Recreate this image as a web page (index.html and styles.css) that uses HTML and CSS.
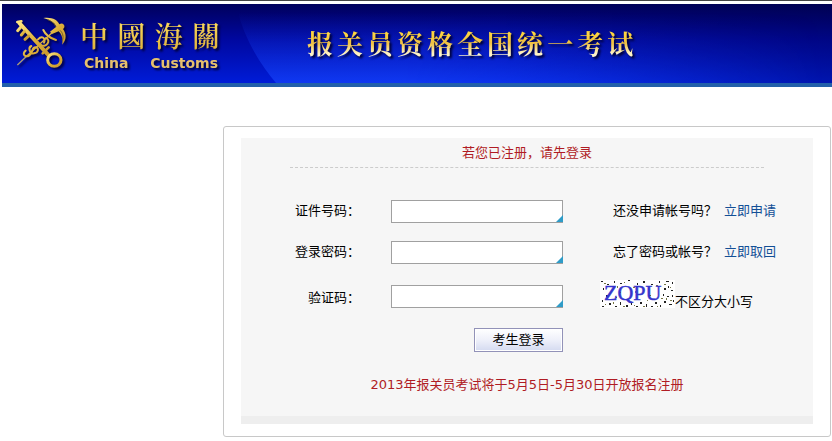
FILE: index.html
```html
<!DOCTYPE html>
<html lang="zh-CN">
<head>
<meta charset="utf-8">
<title>报关员资格全国统一考试</title>
<link rel="stylesheet" href="styles.css">
</head>
<body>
<header class="banner">
  <svg class="sweep" viewBox="0 0 600 79" preserveAspectRatio="none" aria-hidden="true">
    <defs>
      <linearGradient id="sweepFill" x1="0" y1="0" x2="0" y2="1">
        <stop offset="0.1" stop-color="#1034e0" stop-opacity="0"/>
        <stop offset="1" stop-color="#1848ff" stop-opacity="0.65"/>
      </linearGradient>
      <linearGradient id="sweepFade" x1="0" y1="0" x2="1" y2="0">
        <stop offset="0.3" stop-color="#fff"/>
        <stop offset="1" stop-color="#000"/>
      </linearGradient>
      <mask id="sweepMask"><rect width="600" height="79" fill="url(#sweepFade)"/></mask>
    </defs>
    <path d="M14 0C20 30 36 58 54 79H600V0Z" fill="url(#sweepFill)" mask="url(#sweepMask)"/>
  </svg>
  <svg class="emblem" viewBox="0 0 195 195" aria-hidden="true">
    <defs>
      <linearGradient id="gold" x1="0" y1="0" x2="1" y2="1">
        <stop offset="0" stop-color="#ffe680"/>
        <stop offset="0.55" stop-color="#dcae38"/>
        <stop offset="1" stop-color="#c89830"/>
      </linearGradient>
    </defs>
    <g fill="none" stroke="url(#gold)" stroke-linecap="round">
      <path d="M23 164L48 140" stroke="#a79a78" stroke-width="4"/>
      <path d="M48 140L144 52" stroke-width="4"/>
      <path d="M47 122C34 132 46 144 58 136S64 112 76 112 86 128 72 130 54 112 64 108M84 88C96 76 108 84 102 98M100 60C106 74 120 84 138 90M92 104C106 116 126 92 108 84" stroke-width="6"/>
      <path d="M28 39L116 136" stroke-width="12"/>
      <path d="M32 52L23 62M43 64L34 75M56 78L45 88" stroke-width="9"/>
      <path d="M22 36L34 34M98 130L116 112" stroke-width="8"/>
      <ellipse cx="133" cy="150" rx="20" ry="19" stroke-width="9"/>
    </g>
    <path d="M100 24C124 20 143 29 148 43C160 35 169 50 159 57C170 72 170 90 156 104C160 88 156 74 146 64L126 72L120 65L139 50C134 38 120 29 100 24Z" fill="url(#gold)"/>
    <path d="M113 29C127 34 134 42 137 50M157 92C162 80 158 68 150 61" fill="none" stroke="#6d5b2c" stroke-width="3"/>
  </svg>
  <div class="brand">
    <div class="brand-cn"><span>中</span><span>國</span><span>海</span><span>關</span></div>
    <div class="brand-en"><span>China</span> <span>Customs</span></div>
  </div>
  <h1 class="title"><span>报</span><span>关</span><span>员</span><span>资</span><span>格</span><span>全</span><span>国</span><span>统</span><span>一</span><span>考</span><span>试</span></h1>
</header>

<main class="panel">
  <form class="login">
    <h2 class="lead">若您已注册，请先登录</h2>
    <div class="fields">
      <label for="idno">证件号码：</label>
      <span class="box"><input id="idno" type="text"></span>
      <p class="hint">还没申请帐号吗？<a href="#apply">立即申请</a></p>

      <label for="pwd">登录密码：</label>
      <span class="box"><input id="pwd" type="password"></span>
      <p class="hint">忘了密码或帐号？<a href="#recover">立即取回</a></p>

      <label for="code">验证码：</label>
      <span class="box"><input id="code" type="text"></span>
      <p class="verify">
        <svg class="captcha" viewBox="0 0 75 28" role="img" aria-label="ZQPU">
          <rect width="75" height="28" fill="#fff"/>
          <path d="M1 1h2v1h-2zM7 4h2v1h-2zM14 1h1v2h-1zM20 3h2v1h-2zM28 0h2v1h-2zM37 3h1v2h-1zM43 1h2v2h-2zM51 4h2v1h-2zM59 1h1v2h-1zM66 1h3v1h-3zM72 2h1v2h-1zM3 8h1v2h-1zM6 15h2v2h-2zM2 20h1v2h-1zM2 26h2v1h-2zM9 23h2v2h-2zM15 26h2v1h-2zM20 22h1v3h-1zM26 25h2v2h-2zM31 23h1v2h-1zM36 26h2v1h-2zM40 22h2v2h-2zM46 24h1v3h-1zM51 26h2v1h-2zM55 22h2v2h-2zM60 25h1v2h-1zM64 21h2v2h-2zM69 24h3v1h-3zM73 20h1v2h-1zM64 8h2v2h-2zM68 6h1v2h-1zM71 10h2v1h-2zM63 14h1v2h-1zM67 16h2v1h-2zM72 15h1v2h-1z" fill="#222"/>
          <path d="M4 3h2v1h-2zM17 6h1v2h-1zM24 2h1v1h-1zM33 7h2v1h-2zM48 8h1v2h-1zM56 5h2v1h-2zM64 4h2v1h-2zM70 7h1v1h-1zM5 24h1v1h-1zM13 22h1v2h-1zM23 26h2v1h-2zM34 25h1v1h-1zM43 26h2v1h-2zM57 26h1v1h-1zM66 18h1v2h-1zM70 20h2v1h-2zM20 12h1v1h-1zM35 11h1v2h-1zM49 15h2v1h-2zM16 17h1v1h-1zM47 20h1v1h-1zM61 18h2v1h-2z" fill="#777746"/>
          <text class="captcha-text" x="4" y="20">ZQPU</text>
        </svg><span>不区分大小写</span>
      </p>
      <button class="submit" type="submit">考生登录</button>
    </div>
    <p class="notice">2013年报关员考试将于5月5日-5月30日开放报名注册</p>
  </form>
</main>
</body>
</html>
```

FILE: styles.css
```css
* {
  box-sizing: border-box;
}

body {
  margin: 0;
  border-top: 1px solid #444;
  background: #fff;
  color: #000;
  font: 13px/18px "DejaVu Sans", "Noto Sans CJK SC", sans-serif;
}

h1, h2, p {
  margin: 0;
  font-weight: normal;
}

.banner {
  position: relative;
  display: flex;
  align-items: flex-start;
  margin: 3px 0 0 2px;
  height: 83px;
  border-bottom: 4px solid #2260aa;
  background:
    linear-gradient(90deg, rgba(0, 0, 50, 0) 60%, rgba(0, 0, 50, 0.25)),
    linear-gradient(#00005c, #0008a0 45%, #001cd8);
  overflow: hidden;
}

.sweep {
  position: absolute;
  top: 0;
  left: 220px;
  width: 600px;
  height: 79px;
}

.emblem {
  position: relative;
  width: 65px;
  height: 65px;
  margin: 6px 0 0 8px;
  filter: drop-shadow(2px 2px 1px #000040);
}

.brand {
  position: relative;
  margin: 13px 0 0 5px;
  width: 140px;
  filter: drop-shadow(2px 2px 1px #000030);
}

.brand-cn {
  display: flex;
  justify-content: space-between;
  font: 600 28px/36px "Noto Serif CJK TC", "Noto Serif CJK SC", "Noto Sans CJK TC", serif;
}

.brand-cn span,
.title span {
  background: linear-gradient(#ffd840 20%, #f0c040 50%, #fff4c8 80%);
  -webkit-background-clip: text;
  background-clip: text;
  color: transparent;
}

.brand-cn span {
  background-image: linear-gradient(#ffe060, #dcae38);
}

.brand-en {
  display: flex;
  justify-content: space-between;
  padding: 0 2px 0 4px;
  color: #e6c06c;
  font: bold 14px/20px "DejaVu Sans", sans-serif;
}

.title {
  position: relative;
  display: flex;
  gap: 4px;
  margin: 21px 0 0 87px;
  font: bold 26px/36px "Noto Serif CJK SC", "Noto Sans CJK SC", serif;
  filter: drop-shadow(2px 2px 1px #000030);
}

.panel {
  margin: 39px 1px 4px 223px;
  padding: 11px 17px 12px;
  border: 1px solid #c8c8c8;
  border-radius: 3px;
}

.login {
  padding: 6px 49px 22px;
  border-bottom: 8px solid #eee;
  background: #f6f6f6;
}

.lead {
  padding-bottom: 5px;
  border-bottom: 1px dashed #ccc;
  color: #b01c24;
  font-size: 13px;
  line-height: 18px;
  text-align: center;
}

.fields {
  display: grid;
  grid-template-columns: 70px 172px 1fr;
  column-gap: 31px;
  align-items: end;
  padding-top: 32px;
}

.fields label {
  margin-bottom: 20px;
  line-height: 21px;
  text-align: right;
}

.box {
  position: relative;
  display: block;
  margin-bottom: 18px;
}

.box::after {
  content: "";
  position: absolute;
  right: 0;
  bottom: 1px;
  border-bottom: 7px solid #2f9cc8;
  border-left: 7px solid transparent;
}

.box input {
  display: block;
  width: 100%;
  height: 23px;
  padding: 0 8px 0 4px;
  border: 1px solid #a0a0a0;
  background: #fff;
  font: inherit;
}

.hint {
  display: flex;
  gap: 7px;
  margin-bottom: 20px;
  padding-left: 19px;
  line-height: 21px;
  white-space: nowrap;
}

.hint a {
  color: #134f96;
  text-decoration: none;
}

.verify {
  display: flex;
  align-items: flex-end;
  margin: -2px 0 20px;
  padding-left: 6px;
  line-height: 12px;
  white-space: nowrap;
}

.fields label[for="code"],
.box:has(#code) {
  margin-bottom: 20px;
}

.captcha {
  width: 75px;
  height: 28px;
}

.captcha-text {
  fill: #3434cc;
  stroke: #3434cc;
  stroke-width: 0.5px;
  font: 22px "Liberation Serif", serif;
}

.submit {
  grid-column: 2;
  justify-self: end;
  width: 89px;
  height: 24px;
  padding: 0;
  border: 1px solid #9292b8;
  background: linear-gradient(#fff, #eef0fa 50%, #d4daf0);
  box-shadow: inset 0 0 0 1px #fff;
  color: #000;
  font: inherit;
}

.notice {
  margin-top: 24px;
  color: #b01c24;
  text-align: center;
}
```
